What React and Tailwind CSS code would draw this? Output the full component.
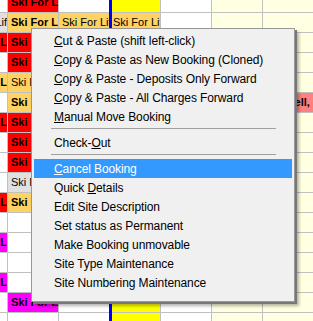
import React from "react";

const W = "bg-white";
const LY = "bg-[#ffffe1]";
const R = "bg-[#ff0000]";
const O = "bg-[#ffd264]";
const G = "bg-[#e0e0e0]";
const M = "bg-[#ff00ff]";
const YY = "bg-[#ffff00]";
const S = "bg-[#ff8080]";

const SKI = "Ski For Life";
const b = (bg, text = "") => ({ bg, text, bold: true });
const n = (bg, text = "") => ({ bg, text, bold: false });

// rows 0..16, visible cells of the booking grid
const col0 = [
  n(W), n(G, "Ski For Lif"), b(R, "Ski For L"), n(W), b(O, "Ski For L"), n(W),
  b(R, "Ski For L"), n(W), n(W), n(W), b(R, "Ski For L"), n(W),
  b(M, "Ski For L"), n(W), b(M, "Ski For L"), n(W), n(W),
];
const col1 = [
  b(R, SKI), b(O, SKI), b(R, SKI), b(R, SKI), n(O, SKI), b(O, SKI),
  b(R, SKI), b(R, SKI), b(R, SKI), n(G, SKI), b(O, SKI), n(W),
  n(W), n(W), n(W), b(M, SKI), n(W),
];
const col2 = Array.from({ length: 17 }, (_, i) => (i === 1 ? n(O, SKI) : n(W)));
const col3 = Array.from({ length: 17 }, (_, i) => (i === 1 ? n(O, SKI) : n(YY)));
const col4 = Array.from({ length: 17 }, () => n(W));
const col5 = Array.from({ length: 17 }, () => n(LY));
const col6 = Array.from({ length: 17 }, (_, i) => (i === 5 ? b(S, "Powell, r") : n(LY)));

function Column({ cells, width, border = true, right = false, pad = "px-[3px]" }) {
  return (
    <div className={`flex flex-col shrink-0 ${width} ${border ? "border-r border-[#c0c0c0]" : ""}`}>
      {cells.map((c, i) => (
        <div
          key={i}
          className={`h-[20px] border-b border-[#c0c0c0] overflow-hidden flex items-center whitespace-nowrap text-[11px] text-black ${c.bg} ${right ? "justify-end" : pad} ${c.bold ? "font-bold" : ""}`}
        >
          {c.text}
        </div>
      ))}
    </div>
  );
}

const Item = ({ children, active }) => (
  <div
    className={`h-[19px] flex items-center pl-[20px] whitespace-nowrap ${active ? "bg-[#3399ff] text-white" : "text-black"}`}
  >
    <span>{children}</span>
  </div>
);

const Sep = () => (
  <div className="h-[7px] pt-[2px] pl-[17px] pr-[16px]">
    <div className="h-px bg-[#a0a0a0]" />
  </div>
);

const U = ({ children }) => <span className="underline underline-offset-[1px]">{children}</span>;

export default function App() {
  return (
    <div className="relative w-[313px] h-[321px] overflow-hidden bg-white" style={{ fontFamily: '"Liberation Sans", Arial, sans-serif' }}>
      <div className="flex -mt-[7px]">
        <Column cells={col0} width="w-[8px]" right />
        <Column cells={col1} width="w-[51px]" />
        <Column cells={col2} width="w-[50px]" border={false} />
        <div className="w-[3px] shrink-0 bg-[#0000ff]" />
        <Column cells={col3} width="w-[49px]" pad="pl-[1px]" />
        <Column cells={col4} width="w-[51px]" />
        <Column cells={col5} width="w-[51px]" />
        <Column cells={col6} width="w-[50px]" border={false} pad="pl-[9px]" />
      </div>

      <div className="absolute left-[31px] top-[28px] w-[264px] bg-[#f0f0f0] border border-[#979797] pt-[2px] pb-[9px] px-[2px] text-[12px] tracking-[-0.1px] shadow-[2px_2px_0_0_#777777,4px_4px_3px_0_rgba(0,0,0,0.3)]">
        <Item><U>C</U>ut &amp; Paste (shift left-click)</Item>
        <Item><U>C</U>opy &amp; Paste as New Booking (Cloned)</Item>
        <Item><U>C</U>opy &amp; Paste - Deposits Only Forward</Item>
        <Item><U>C</U>opy &amp; Paste - All Charges Forward</Item>
        <Item><U>M</U>anual Move Booking</Item>
        <Sep />
        <Item>Check-<U>O</U>ut</Item>
        <Sep />
        <Item active><U>C</U>ancel Booking</Item>
        <Item>Quick <U>D</U>etails</Item>
        <Item>Edit Site Description</Item>
        <Item>Set status as Permanent</Item>
        <Item>Make Booking unmovable</Item>
        <Item>Site Type Maintenance</Item>
        <Item>Site Numbering Maintenance</Item>
      </div>
    </div>
  );
}
